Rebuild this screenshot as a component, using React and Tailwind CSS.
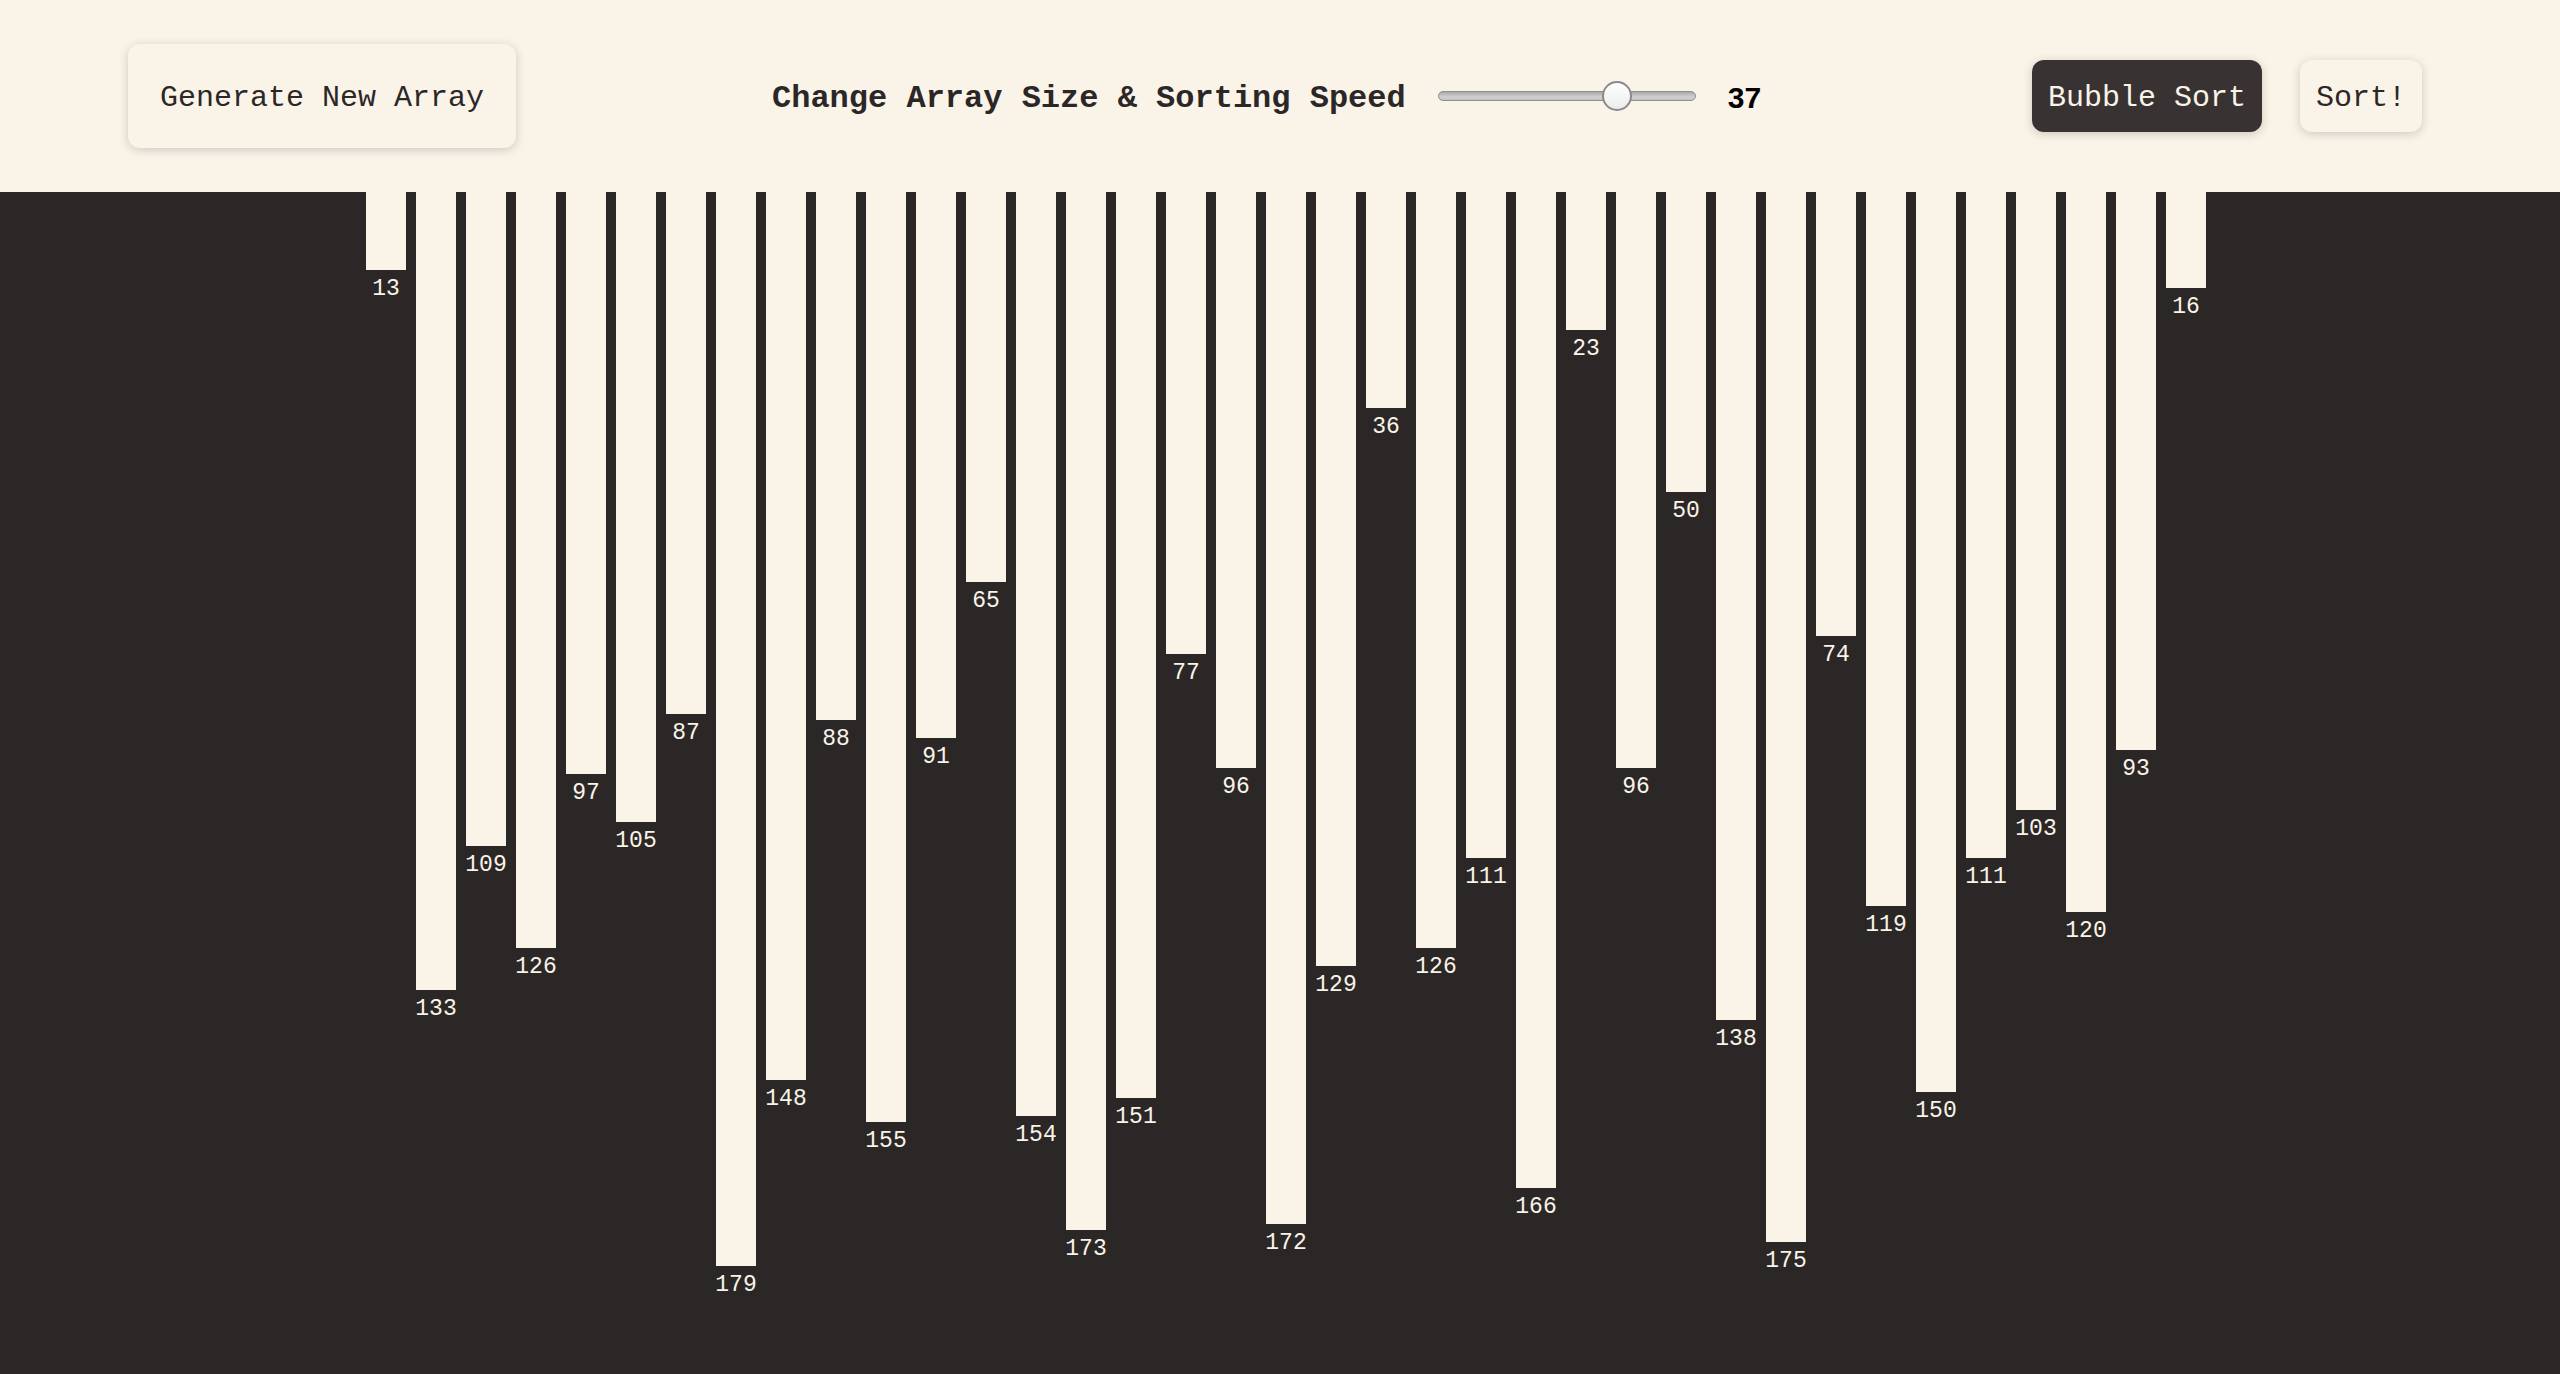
import React from "react";

const values = [
  13, 133, 109, 126, 97, 105, 87, 179, 148, 88, 155, 91, 65, 154, 173, 151, 77,
  96, 172, 129, 36, 126, 111, 166, 23, 96, 50, 138, 175, 74, 119, 150, 111, 103,
  120, 93, 16,
];

const mono = "font-['Liberation_Mono',monospace]";

export default function App() {
  return (
    <div className={`min-h-screen bg-[#2c2727] ${mono}`}>
      <header className="flex h-[192px] items-center bg-[#f9f3e8] pl-[128px] pr-[138px]">
        <button className="h-[104px] w-[388px] rounded-[12px] bg-[#f9f3e8] pt-[5px] text-[30px] text-[#2c2727] shadow-[0_2px_10px_rgba(60,50,40,0.22)]">
          Generate New Array
        </button>

        <div className="ml-[256px] flex items-center">
          <span className="pt-[6px] text-[32px] font-bold text-[#2c2727]">
            Change Array Size &amp; Sorting Speed
          </span>
          <Slider left={164} />
          <span className="ml-[32px] pt-[3px] font-['Liberation_Sans',Arial,sans-serif] text-[30px] font-bold text-black">
            37
          </span>
        </div>

        <div className="ml-auto flex items-center gap-[38px]">
          <button className="h-[72px] w-[230px] rounded-[12px] bg-[#383232] pt-[5px] text-[30px] text-[#f9f3e8] shadow-[0_2px_10px_rgba(60,50,40,0.22)]">
            Bubble Sort
          </button>
          <button className="h-[72px] w-[122px] rounded-[12px] bg-[#f9f3e8] pt-[5px] text-[30px] text-[#2c2727] shadow-[0_2px_10px_rgba(60,50,40,0.22)]">
            Sort!
          </button>
        </div>
      </header>

      <main className="flex items-start gap-[10px] pl-[366px]">
        {values.map((v, i) => (
          <div key={i} className="flex w-[40px] flex-col items-center">
            <div className="w-[40px] bg-[#f9f3e8]" style={{ height: v * 6 }} />
            <span className="mt-[6px] text-[23px] leading-[1.2] text-[#f9f3e8]">
              {v}
            </span>
          </div>
        ))}
      </main>
    </div>
  );
}

function Slider({ left }) {
  return (
    <div className="relative ml-[32px] h-[30px] w-[258px]">
      <div className="absolute left-0 right-0 top-[10px] h-[10px] rounded-full border border-[#8f8f8f] bg-[linear-gradient(180deg,#a9a9a9,#cfcfcf_60%,#c4c4c4)]" />
      <div
        className="absolute top-0 h-[30px] w-[30px] rounded-full border-2 border-[#8a8a8a] bg-[linear-gradient(180deg,#ffffff,#ececec)]"
        style={{ left }}
      />
    </div>
  );
}
